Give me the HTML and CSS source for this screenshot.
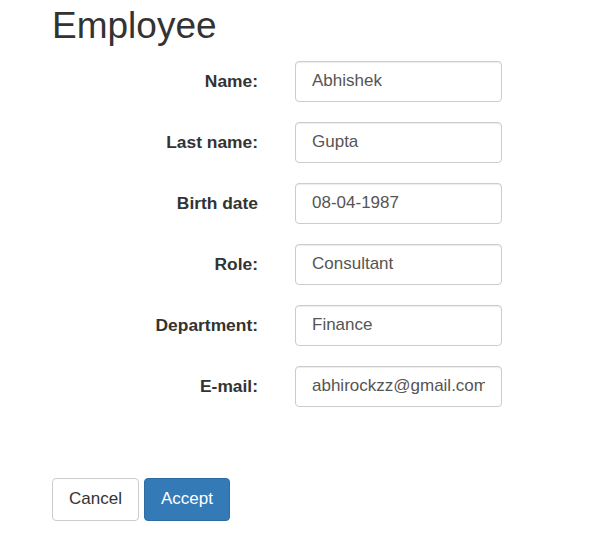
FILE: index.html
```html
<!DOCTYPE html>
<html>
<head>
<meta charset="utf-8">
<link rel="stylesheet" href="styles.css">
</head>
<body>
<div class="page">
  <h1 class="title">Employee</h1>
  <form class="form">
    <div class="row"><label class="label">Name:</label><input class="field" type="text" value="Abhishek"></div>
    <div class="row"><label class="label">Last name:</label><input class="field" type="text" value="Gupta"></div>
    <div class="row"><label class="label">Birth date</label><input class="field" type="text" value="08-04-1987"></div>
    <div class="row"><label class="label">Role:</label><input class="field" type="text" value="Consultant"></div>
    <div class="row"><label class="label">Department:</label><input class="field" type="text" value="Finance"></div>
    <div class="row"><label class="label">E-mail:</label><input class="field" type="text" value="abhirockzz@gmail.com"></div>
  </form>
  <div class="actions">
    <button class="btn btn-default" type="button">Cancel</button>
    <button class="btn btn-primary" type="button">Accept</button>
  </div>
</div>
</body>
</html>
```

FILE: styles.css
```css
* { box-sizing: border-box; }
html, body { margin: 0; padding: 0; background: #fff; }
body {
  font-family: "Liberation Sans", Arial, sans-serif;
  color: #333;
}
.page {
  padding: 6px 0 0 52px;
}
.title {
  margin: 0;
  font-size: 37px;
  line-height: 1.1;
  font-weight: normal;
  color: #333;
}
.form {
  display: flex;
  flex-direction: column;
  gap: 20px;
  margin-top: 14px;
}
.row {
  display: grid;
  grid-template-columns: 206px 207px;
  column-gap: 37px;
  align-items: center;
}
.label {
  text-align: right;
  font-weight: bold;
  font-size: 17.4px;
  color: #333;
}
.field {
  height: 41px;
  width: 207px;
  padding: 0 16px;
  font-family: "Liberation Sans", Arial, sans-serif;
  font-size: 17px;
  color: #555;
  border: 1px solid #ccc;
  border-radius: 4px;
  background: #fff;
  box-shadow: inset 0 1px 1px rgba(0,0,0,0.075);
  outline: none;
}
.actions {
  display: flex;
  gap: 5px;
  margin-top: 71px;
}
.btn {
  height: 43px;
  padding: 0 16px;
  font-family: "Liberation Sans", Arial, sans-serif;
  font-size: 17px;
  border-radius: 4px;
  border: 1px solid #ccc;
  cursor: pointer;
}
.btn-default {
  background: #fff;
  color: #333;
}
.btn-primary {
  background: #337ab7;
  border-color: #2e6da4;
  color: #fff;
}
```
